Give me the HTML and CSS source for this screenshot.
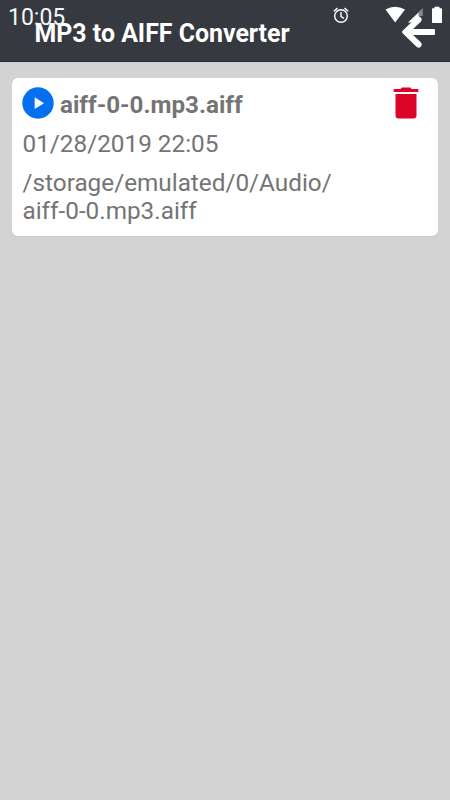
FILE: index.html
```
<!DOCTYPE html>
<html lang="en">
<head>
<meta charset="utf-8">
<title>MP3 to AIFF Converter</title>
<link rel="stylesheet" href="styles.css">
</head>
<body>
<header class="app-bar">
  <h1 class="title">MP3 to AIFF Converter</h1>
  <svg class="back" viewBox="0 0 34 34" aria-hidden="true"><path d="M14.500 2.500Q16.800.4 19 2.700Q20.700 4.800 18.500 7L11 14H32Q33 14 33 15V19Q33 20 32 20H11L18.500 27Q20.700 29.200 19 31.500Q16.800 34 14.500 31.700L.6 18.200Q-.4 17 .6 15.800Z"/></svg>
  <div class="status-bar">
    <span class="clock">10:05</span>
    <svg class="status-icons" viewBox="0 0 120 34" aria-hidden="true">
      <g class="alarm"><circle cx="11" cy="16" r="6.300"/><path d="M11 12v4.500l3 1.800M3.800 11.300l3.700-3.200M18.200 11.300l-3.700-3.200"/></g>
      <path class="solid" d="M55.500 9.500Q65 4 75 9.500L65.200 22.500Z"/>
      <path class="solid" d="M78 22.500L89 12V22.500Z"/>
      <path class="dim" d="M88.500 12l4.300-4V16H88.500Z"/>
      <path class="solid" d="M102 9q0-.7.700-.7H104.500V6.800h5v1.500h1.800q.7 0 .7.700V22.300q0 .7-.7.700h-8.600q-.7 0-.7-.7Z"/>
    </svg>
  </div>
</header>
<main class="list">
  <article class="card">
    <div class="card-head">
      <svg class="play" viewBox="0 0 32 32" aria-hidden="true"><circle cx="16" cy="16" r="15.700"/><path d="M12.700 10.300v11.800L22 16.200Z"/></svg>
      <h2 class="name">aiff-0-0.mp3.aiff</h2>
      <svg class="trash" viewBox="0 0 26 32" aria-hidden="true"><path d="M.7 1.900H7.500L8.800.5H17.200L18.500 1.900H25.300V5H.7ZM2.500 7H23.500V28.500Q23.500 31.500 20.500 31.500H5.500Q2.500 31.500 2.500 28.500Z"/></svg>
    </div>
    <p class="date">01/28/2019 22:05</p>
    <p class="path">/storage/emulated/0/Audio/<br>aiff-0-0.mp3.aiff</p>
  </article>
</main>
</body>
</html>
```
FILE: styles.css
```
* { box-sizing: border-box; }
body {
  margin: 0;
  min-height: 800px;
  background: #d3d3d3;
  font-family: Roboto, sans-serif;
  font-size: 24.3px;
  line-height: 28px;
  color: #747474;
}
h1, h2, p { margin: 0; }
.app-bar {
  position: relative;
  display: flex;
  justify-content: space-between;
  height: 62px;
  padding: 15px 14px 0 34.5px;
  background: #363940;
  border-bottom: 1px solid #292c32;
}
.title {
  padding-top: 5px;
  font-size: 24.9px;
  font-weight: 700;
  line-height: 27px;
  color: #fff;
  white-space: nowrap;
}
.back {
  width: 34px;
  height: 34px;
  fill: #fff;
}
.status-bar {
  position: absolute;
  inset: 0 0 auto;
  display: flex;
  justify-content: space-between;
  height: 34px;
  padding-left: 8px;
}
.clock {
  padding-top: 4px;
  font-size: 23px;
  color: #f3f7fa;
}
.status-icons { width: 120px; height: 34px; }
.alarm { fill: none; stroke: #fff; stroke-width: 1.4; }
.solid { fill: #fff; }
.dim { fill: #85878b; }
.list { padding: 16px 12px; }
.card {
  height: 158px;
  padding: 9px 19px 0 10px;
  border-radius: 6px;
  background: #fff;
  box-shadow: 0 1px 1px #c8c8c8;
}
.card-head { display: flex; height: 43px; }
.play { width: 32px; height: 32px; fill: #0570ef; }
.play path { fill: #fff; }
.name {
  flex: 1;
  padding: 4px 0 0 6px;
  font-size: 24.2px;
  font-weight: 700;
}
.trash { width: 26px; height: 32px; fill: #db0326; }
.date, .path { padding-left: 0.5px; }
.path { padding-top: 11px; }
```
